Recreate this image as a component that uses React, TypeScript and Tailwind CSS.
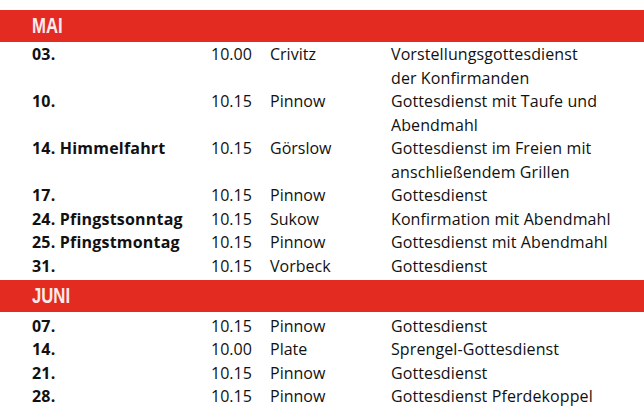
import React from "react";

type Row = { d: string; t: string; p: string; desc: string[] };

const mai: Row[] = [
  { d: "03.", t: "10.00", p: "Crivitz", desc: ["Vorstellungsgottesdienst", "der Konfirmanden"] },
  { d: "10.", t: "10.15", p: "Pinnow", desc: ["Gottesdienst mit Taufe und", "Abendmahl"] },
  { d: "14. Himmelfahrt", t: "10.15", p: "Görslow", desc: ["Gottesdienst im Freien mit", "anschließendem Grillen"] },
  { d: "17.", t: "10.15", p: "Pinnow", desc: ["Gottesdienst"] },
  { d: "24. Pfingstsonntag", t: "10.15", p: "Sukow", desc: ["Konfirmation mit Abendmahl"] },
  { d: "25. Pfingstmontag", t: "10.15", p: "Pinnow", desc: ["Gottesdienst mit Abendmahl"] },
  { d: "31.", t: "10.15", p: "Vorbeck", desc: ["Gottesdienst"] },
];

const juni: Row[] = [
  { d: "07.", t: "10.15", p: "Pinnow", desc: ["Gottesdienst"] },
  { d: "14.", t: "10.00", p: "Plate", desc: ["Sprengel-Gottesdienst"] },
  { d: "21.", t: "10.15", p: "Pinnow", desc: ["Gottesdienst"] },
  { d: "28.", t: "10.15", p: "Pinnow", desc: ["Gottesdienst Pferdekoppel"] },
];

function Header({ label }: { label: string }) {
  return (
    <div className="h-[32px] bg-[#e32b21] flex items-center pl-[32px]">
      <span
        className="inline-block text-[#fbeaea] font-bold text-[22px] leading-none origin-left scale-x-[0.76]"
        style={{ fontFamily: '"Liberation Sans", Arial, sans-serif' }}
      >
        {label}
      </span>
    </div>
  );
}

function Rows({ rows }: { rows: Row[] }) {
  return (
    <div className="pl-[32px]">
      {rows.map((r, i) => (
        <div key={i} className="grid grid-cols-[179px_59px_121px_1fr] text-[16px] leading-[23.5px] text-[#111111]">
          <div className="font-bold tracking-[0.2px]">{r.d}</div>
          <div>{r.t}</div>
          <div>{r.p}</div>
          <div className="tracking-[0.1px]">
            {r.desc.map((l, j) => (
              <div key={j}>{l}</div>
            ))}
          </div>
        </div>
      ))}
    </div>
  );
}

export default function App() {
  return (
    <div
      className="w-[644px] h-[407px] bg-white overflow-hidden pt-[10px]"
      style={{ fontFamily: '"Open Sans", "Noto Sans", sans-serif' }}
    >
      <Header label="MAI" />
      <div className="pt-[1px]">
        <Rows rows={mai} />
      </div>
      <div className="mt-[2px]">
        <Header label="JUNI" />
      </div>
      <div className="pt-[2.5px]">
        <Rows rows={juni} />
      </div>
    </div>
  );
}
